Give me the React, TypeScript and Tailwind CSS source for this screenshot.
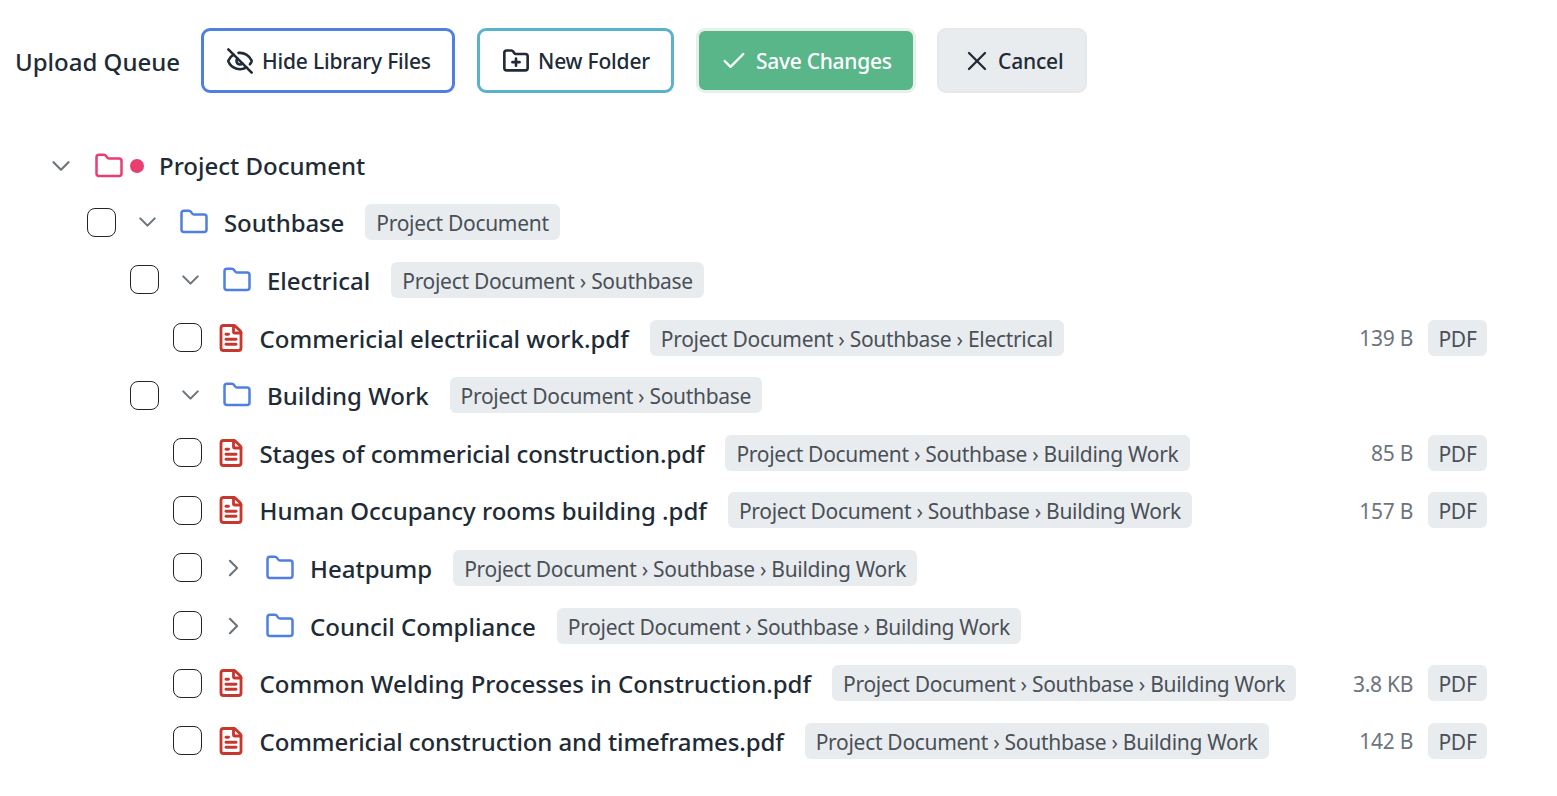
import { Check, ChevronDown, ChevronRight, EyeOff, FileText, Folder, FolderPlus, X } from 'lucide-react'

type Node = {
  kind: 'folder' | 'file'
  name: string
  path: string
  indent: string
  open?: boolean
  size?: string
  tight?: boolean
}

const southbase = 'Project Document › Southbase'
const building = 'Project Document › Southbase › Building Work'

const nodes: Node[] = [
  { kind: 'folder', name: 'Southbase', path: 'Project Document', indent: 'pl-[87px]', open: true, tight: true },
  { kind: 'folder', name: 'Electrical', path: southbase, indent: 'pl-[130px]', open: true },
  { kind: 'file', name: 'Commericial electriical work.pdf', path: 'Project Document › Southbase › Electrical', indent: 'pl-[173px]', size: '139 B' },
  { kind: 'folder', name: 'Building Work', path: southbase, indent: 'pl-[130px]', open: true },
  { kind: 'file', name: 'Stages of commericial construction.pdf', path: building, indent: 'pl-[173px]', size: '85 B', tight: true },
  { kind: 'file', name: 'Human Occupancy rooms building .pdf', path: building, indent: 'pl-[173px]', size: '157 B' },
  { kind: 'folder', name: 'Heatpump', path: building, indent: 'pl-[173px]' },
  { kind: 'folder', name: 'Council Compliance', path: building, indent: 'pl-[173px]' },
  { kind: 'file', name: 'Common Welding Processes in Construction.pdf', path: building, indent: 'pl-[173px]', size: '3.8 KB' },
  { kind: 'file', name: 'Commericial construction and timeframes.pdf', path: building, indent: 'pl-[173px]', size: '142 B', tight: true },
]

function Row({ node }: { node: Node }) {
  const nameClass = node.tight ? 'font-medium tracking-[-0.1px] text-[#212b36]' : 'font-medium text-[#212b36]'
  return (
    <div className={`flex h-[57.6px] items-center pr-[70px] ${node.indent}`}>
      <span className="mb-[2px] h-[29px] w-[29px] shrink-0 rounded-[8px] border border-[#212529] bg-white" />
      {node.kind === 'folder' ? (
        <>
          <span className="mb-[2px] ml-[17px] flex w-[29px] shrink-0 justify-center text-[#6c757d]">
            {node.open ? <ChevronDown className="h-[30px] w-[30px]" strokeWidth={1.75} /> : <ChevronRight className="h-[30px] w-[30px]" strokeWidth={1.75} />}
          </span>
          <Folder className="mb-[2px] ml-[17px] h-[30px] w-[30px] shrink-0 text-[#4f80e1]" strokeWidth={2} />
          <span className={`ml-[15px] ${nameClass}`}>{node.name}</span>
        </>
      ) : (
        <>
          <FileText className="mb-[2px] ml-[14px] h-[30px] w-[30px] shrink-0 text-[#c8372d]" strokeWidth={2.25} />
          <span className={`ml-[13.5px] ${nameClass}`}>{node.name}</span>
        </>
      )}
      <span className="mb-[2px] ml-[21px] flex h-[36px] items-center rounded-[6px] bg-[#e9ecef] px-[11px] pt-[3px] text-[21px] tracking-[-0.3px] text-[#495057]">
        {node.path}
      </span>
      {node.size && (
        <>
          <span className="ml-auto text-[21px] tracking-[-0.3px] text-[#6c757d]">{node.size}</span>
          <span className="mb-[2px] ml-[15px] flex h-[36px] w-[59px] items-center justify-center rounded-[6px] bg-[#e9ecef] pt-[3px] text-[21px] tracking-[-0.3px] text-[#495057]">
            PDF
          </span>
        </>
      )}
    </div>
  )
}

export default function App() {
  return (
    <div className="min-h-[796px] bg-white pt-[28px] text-[24px] leading-none text-[#212b36] [font-family:'Noto_Sans',sans-serif]">
      <div className="flex items-center pl-[15px]">
        <span className="pt-[2px] font-medium">Upload Queue</span>
        <button type="button" className="ml-[21px] flex h-[65px] w-[254px] items-center gap-[8px] rounded-[9px] border-[3px] border-[#4f80e1] bg-white pl-[22px] text-[21px] font-medium tracking-[-0.2px]">
          <EyeOff className="h-[28px] w-[28px]" strokeWidth={2.25} /> <span className="pt-[2px]">Hide Library Files</span>
        </button>
        <button type="button" className="ml-[22px] flex h-[65px] w-[197px] items-center gap-[8px] rounded-[9px] border-[3px] border-[#5bb2cc] bg-white pl-[22px] text-[21px] font-medium tracking-[-0.2px]">
          <FolderPlus className="h-[28px] w-[28px]" strokeWidth={2.25} /> <span className="pt-[2px]">New Folder</span>
        </button>
        <button type="button" className="ml-[22px] flex h-[65px] w-[220px] items-center gap-[8px] rounded-[9px] border-[3px] border-[#e6efea] bg-[#58b689] pl-[21px] text-[21px] font-medium tracking-[-0.3px] text-white">
          <Check className="h-[28px] w-[28px]" strokeWidth={2} /> <span className="pt-[2px]">Save Changes</span>
        </button>
        <button type="button" className="ml-[21px] flex h-[65px] w-[150px] items-center gap-[5px] rounded-[9px] border-[2px] border-[#e6e8ea] bg-[#e9ecef] pl-[22px] text-[21px] font-medium tracking-[-0.2px]">
          <X className="h-[32px] w-[32px]" strokeWidth={1.75} /> <span className="pt-[2px]">Cancel</span>
        </button>
      </div>
      <div className="mt-[44px]">
        <div className="flex h-[57.6px] items-center pl-[46px]">
          <ChevronDown className="h-[30px] w-[30px] text-[#6c757d]" strokeWidth={1.75} />
          <Folder className="ml-[18px] h-[30px] w-[30px] text-[#e83e72]" strokeWidth={2} />
          <span className="ml-[6px] h-[14px] w-[14px] rounded-full bg-[#e83e72]" />
          <span className="ml-[15px] font-medium">Project Document</span>
        </div>
        {nodes.map((node) => (
          <Row key={node.name} node={node} />
        ))}
      </div>
    </div>
  )
}
